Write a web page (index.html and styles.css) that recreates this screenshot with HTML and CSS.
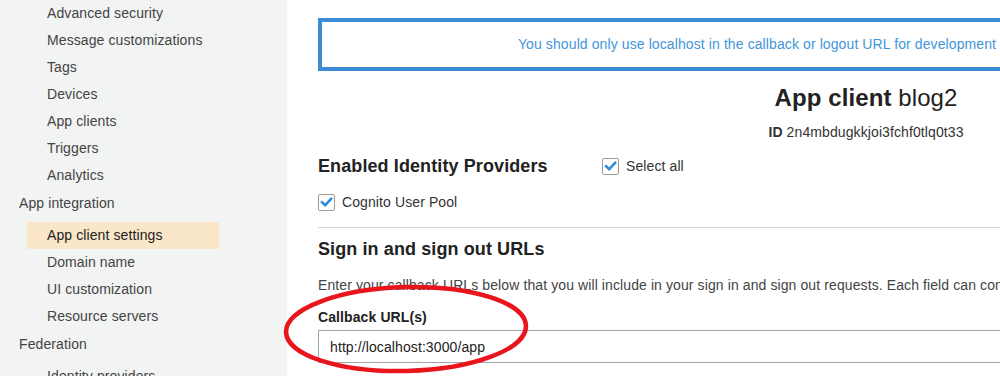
FILE: index.html
```html
<!DOCTYPE html>
<html lang="en">
<head>
<meta charset="utf-8">
<title>App client settings</title>
<link rel="stylesheet" href="styles.css">
</head>
<body>
<div class="page">
  <nav class="sidebar">
    <ul class="sub first">
      <li class="item">Advanced security</li>
      <li class="item">Message customizations</li>
      <li class="item">Tags</li>
      <li class="item">Devices</li>
      <li class="item">App clients</li>
      <li class="item">Triggers</li>
      <li class="item">Analytics</li>
    </ul>
    <div class="group">App integration</div>
    <ul class="sub">
      <li class="item active">App client settings</li>
      <li class="item">Domain name</li>
      <li class="item">UI customization</li>
      <li class="item">Resource servers</li>
    </ul>
    <div class="group">Federation</div>
    <ul class="sub">
      <li class="item">Identity providers</li>
    </ul>
  </nav>
  <main class="main">
    <div class="banner">You should only use localhost in the callback or logout URL for development</div>
    <h1 class="title"><b>App client</b> blog2</h1>
    <div class="client-id"><b>ID</b> 2n4mbdugkkjoi3fchf0tlq0t33</div>
    <div class="providers-row">
      <h2 class="section-title providers-title">Enabled Identity Providers</h2>
      <label class="check">
        <span class="box"><svg viewBox="0 0 16 16" width="16" height="16"><path d="M3.2 8.2 L6.6 11.4 L13 4.6" fill="none" stroke="#2f89d8" stroke-width="2.6" stroke-linecap="square"/></svg></span>
        Select all
      </label>
    </div>
    <label class="check pool">
      <span class="box"><svg viewBox="0 0 16 16" width="16" height="16"><path d="M3.2 8.2 L6.6 11.4 L13 4.6" fill="none" stroke="#2f89d8" stroke-width="2.6" stroke-linecap="square"/></svg></span>
      Cognito User Pool
    </label>
    <hr class="divider">
    <h2 class="section-title urls-title">Sign in and sign out URLs</h2>
    <p class="desc">Enter your callback URLs below that you will include in your sign in and sign out requests. Each field can contain multiple URLs, separated by commas.</p>
    <div class="field-label">Callback URL(s)</div>
    <div class="input">http://localhost:3000/app</div>
  </main>
  <svg class="annotation" width="270" height="110" viewBox="0 0 270 110">
    <ellipse cx="126" cy="49" rx="120" ry="42" fill="none" stroke="#e8151d" stroke-width="4.5" transform="rotate(-1.5 126 49)"/>
  </svg>
</div>
</body>
</html>
```
FILE: styles.css
```css
html, body {
  margin: 0;
  padding: 0;
  overflow: hidden;
}
body {
  font-family: "Liberation Sans", Arial, sans-serif;
  font-size: 14px;
  letter-spacing: 0.1px;
  color: #333;
  background: #fff;
}
.page {
  position: relative;
  display: flex;
  width: 1000px;
  height: 376px;
  overflow: hidden;
}
.sidebar {
  flex: 0 0 287px;
  background: #f2f3f3;
  color: #444;
}
.sub {
  list-style: none;
  margin: 6px 0 0;
  padding: 0;
}
.sub.first {
  margin-top: 0;
}
.item {
  height: 27px;
  line-height: 27px;
  padding-left: 47px;
  white-space: nowrap;
}
.item.active {
  box-sizing: border-box;
  height: 27px;
  line-height: 27px;
  margin-left: 27px;
  width: 192px;
  padding-left: 20px;
  background: #fae6c8;
  color: #222;
}
.group {
  height: 27px;
  line-height: 28px;
  padding-left: 19px;
  color: #444;
}
.main {
  flex: 0 0 1096px;
  padding: 18px 0 0 31px;
}
.banner {
  box-sizing: border-box;
  width: 878px;
  height: 53px;
  border: 4px solid #3a8dd2;
  color: #3f96da;
  text-align: center;
  line-height: 45px;
}
.title {
  margin: 13px 0 0;
  width: 1096px;
  text-align: center;
  font-size: 24px;
  line-height: 28px;
  font-weight: normal;
  color: #222;
}
.client-id {
  margin-top: 10px;
  width: 1096px;
  text-align: center;
  line-height: 20px;
  color: #333;
}
.providers-row {
  display: flex;
  align-items: center;
  margin-top: 12px;
  height: 24px;
}
.section-title {
  margin: 0;
  font-size: 18px;
  line-height: 24px;
  font-weight: bold;
  color: #222;
}
.providers-title {
  width: 284px;
}
.check {
  display: flex;
  align-items: center;
  gap: 7px;
  line-height: 20px;
  color: #333;
}
.box {
  box-sizing: border-box;
  width: 17px;
  height: 17px;
  border: 1px solid #9a9a9a;
  border-radius: 2px;
  background: #fff;
  display: flex;
  align-items: center;
  justify-content: center;
}
.box svg {
  display: block;
}
.pool {
  margin-top: 14px;
}
.divider {
  margin: 15px 0 0;
  width: 1096px;
  border: 0;
  border-top: 1px solid #d3d3d3;
  height: 0;
}
.urls-title {
  margin-top: 9px;
}
.desc {
  margin: 14px 0 0;
  line-height: 20px;
  white-space: nowrap;
  color: #444;
}
.field-label {
  margin-top: 12px;
  font-weight: bold;
  line-height: 20px;
  color: #222;
}
.input {
  box-sizing: border-box;
  margin-top: 3px;
  width: 1096px;
  height: 33px;
  border: 1px solid #a4a4a4;
  padding-left: 11px;
  line-height: 32px;
  color: #222;
}
.annotation {
  position: absolute;
  left: 280px;
  top: 280px;
}
```
